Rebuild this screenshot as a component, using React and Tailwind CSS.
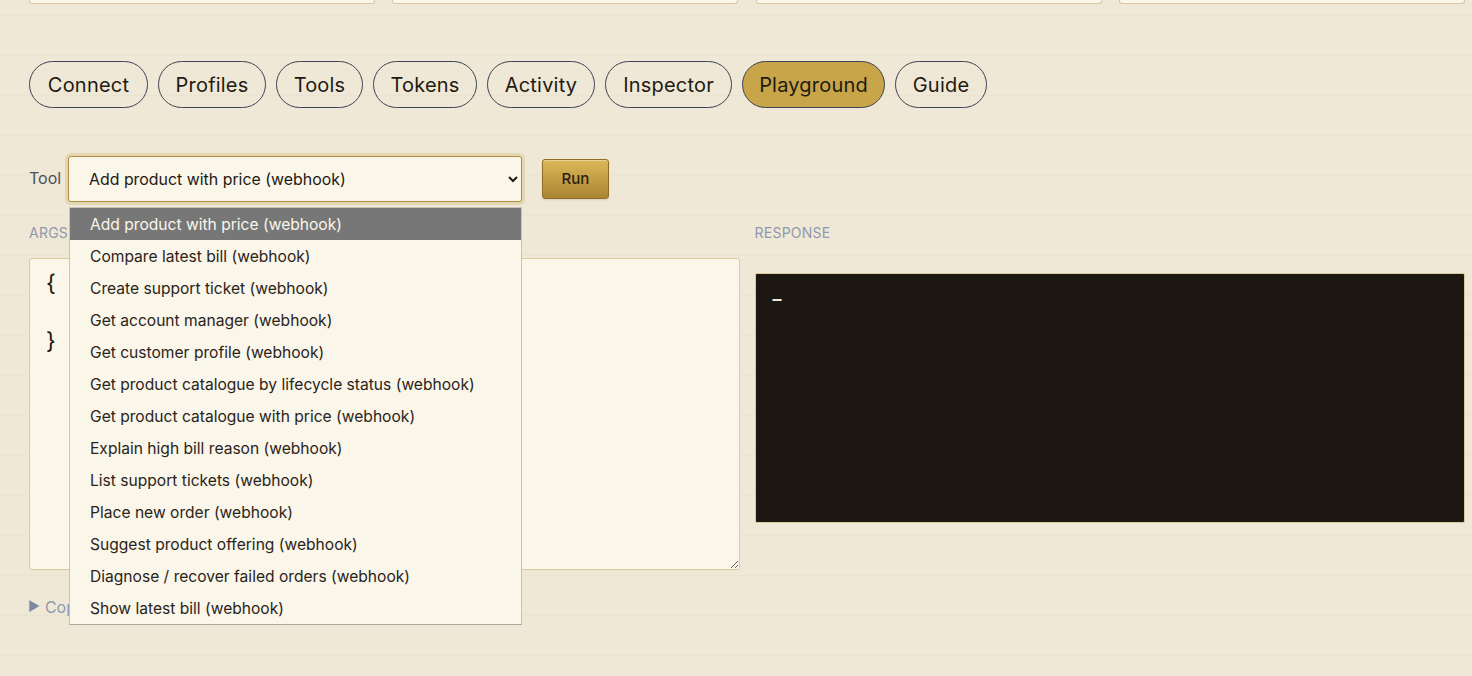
const tabs = [
  { label: "Connect", width: "w-[119px]" },
  { label: "Profiles", width: "w-[108px]" },
  { label: "Tools", width: "w-[87px]" },
  { label: "Tokens", width: "w-[104px]" },
  { label: "Activity", width: "w-[108px]" },
  { label: "Inspector", width: "w-[127px]" },
  { label: "Playground", width: "w-[143px]" },
  { label: "Guide", width: "w-[92px]" },
];

const tools = [
  "Add product with price (webhook)",
  "Compare latest bill (webhook)",
  "Create support ticket (webhook)",
  "Get account manager (webhook)",
  "Get customer profile (webhook)",
  "Get product catalogue by lifecycle status (webhook)",
  "Get product catalogue with price (webhook)",
  "Explain high bill reason (webhook)",
  "List support tickets (webhook)",
  "Place new order (webhook)",
  "Suggest product offering (webhook)",
  "Diagnose / recover failed orders (webhook)",
  "Show latest bill (webhook)",
];

export default function App() {
  return (
    <div className="relative h-[676px] overflow-hidden bg-[#efe8d6] bg-[linear-gradient(to_bottom,#eae3d0_1px,transparent_1px)] bg-[length:100%_40px] bg-[position:0_15px] pl-[29px] pr-[7px] font-['Inter','Noto_Sans',sans-serif] text-[#1f1a12]">
      <div className="grid h-[4px] grid-cols-4 gap-[17.4px]">
        <div className="rounded-b-[3px] border border-t-0 border-[#d8c9a0] bg-[#faf6ea]" />
        <div className="rounded-b-[3px] border border-t-0 border-[#d8c9a0] bg-[#faf6ea]" />
        <div className="rounded-b-[3px] border border-t-0 border-[#d8c9a0] bg-[#faf6ea]" />
        <div className="rounded-b-[3px] border border-t-0 border-[#d8c9a0] bg-[#faf6ea]" />
      </div>

      <div className="mt-[57px] flex gap-[10px]">
        {tabs.map((t) => (
          <button
            key={t.label}
            className={`h-[47px] rounded-[24px] border border-[#3f4354] text-[20px] tracking-[0.2px] ${t.width} ${t.label === "Playground" ? "bg-[#c7a548]" : ""}`}
          >
            {t.label}
          </button>
        ))}
      </div>

      <div className="mt-[48px] flex items-center">
        <label className="w-[39px] pb-[2px] text-[16px] text-[#4b4f5c]">Tool</label>
        <select className="h-[46px] w-[454px] rounded-[3px] border border-[#b08d3f] bg-[#faf6ea] pl-[16px] text-[15.9px] ring-3 ring-[#e3d6b3] outline-none">
          {tools.map((t) => (
            <option key={t}>{t}</option>
          ))}
        </select>
        <button className="ml-[20px] h-[40px] w-[67px] rounded-[3px] border border-[#8f6c28] bg-linear-to-b from-[#dcb858] to-[#ab8434] text-[15px] font-medium text-[#2a2112] shadow-[inset_0_1px_0_rgba(255,255,255,0.35),0_1px_2px_rgba(0,0,0,0.1)]">
          Run
        </button>
      </div>

      <div className="mt-[23px] grid grid-cols-2 gap-[15px]">
        <div>
          <div className="text-[14px] leading-[16px] tracking-[0.25px] text-[#8f98ae]">ARGS</div>
          <textarea
            className="mt-[17px] block h-[312px] w-full rounded-[3px] border border-[#d8c9a0] bg-[#faf6ea] px-[16px] py-[10px] text-[23px] leading-[29px] outline-none"
            defaultValue={"{\n\n}"}
          />
        </div>
        <div>
          <div className="text-[14px] leading-[16px] tracking-[0.25px] text-[#8f98ae]">RESPONSE</div>
          <div className="mt-[32px] h-[250px] rounded-[2px] border border-[#d8c9a0] bg-[#1c1811] px-[17px] pt-[13px] text-[18px] font-semibold leading-[24px] text-[#efe8d6]">
            –
          </div>
        </div>
      </div>

      <div className="mt-[25px] flex items-center gap-[5px] text-[16px] text-[#8f98ae]">
        <span className="-ml-[1px] text-[13px] text-[#7f88a3]">▶</span>
        <span>Copy</span>
      </div>

      <ul className="absolute top-[207px] left-[69px] w-[453px] border border-[#c8c4b8] border-b-[#a9a69e] bg-[#faf6ea] text-[15.6px] text-[#2a2419]">
        {tools.map((t, i) => (
          <li
            key={t}
            className={`flex h-[32px] items-center pt-[2px] pl-[20px] ${i === 0 ? "bg-[#777777] text-[#faf6ea]" : ""}`}
          >
            {t}
          </li>
        ))}
      </ul>
    </div>
  );
}
